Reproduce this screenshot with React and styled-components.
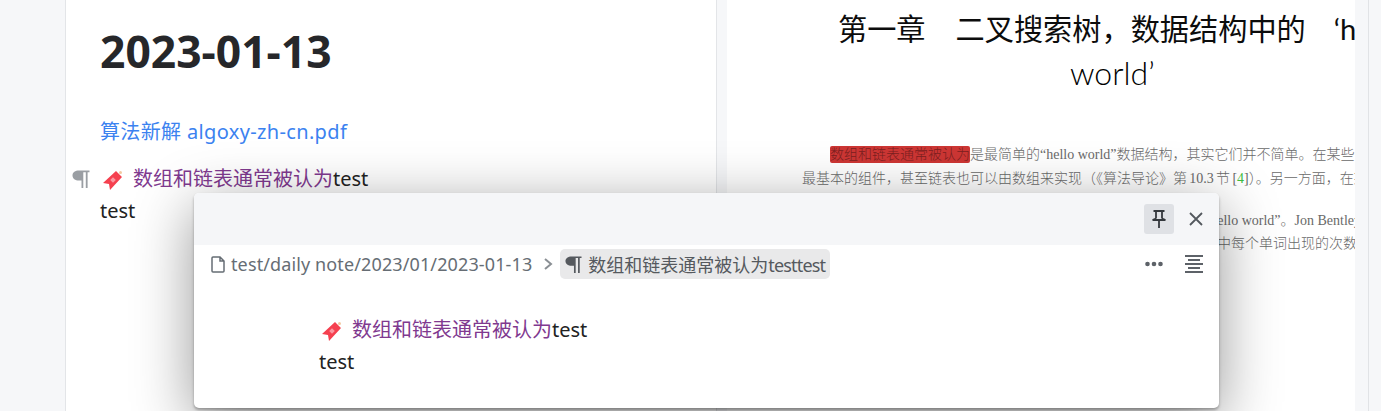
import React from 'react';
import styled, { createGlobalStyle } from 'styled-components';

const sans = `"Noto Sans", "Noto Sans CJK SC", sans-serif`;

const GlobalStyle = createGlobalStyle`
  html, body {
    margin: 0;
    padding: 0;
    background: #fff;
  }
`;

const Workspace = styled.div`
  position: relative;
  width: 1381px;
  height: 411px;
  overflow: hidden;
  display: grid;
  grid-template-columns: 65px 652px 10px 628px 26px;
  font-family: ${sans};
  color: #222;
`;

const Sidebar = styled.div`
  background: #f6f7f9;
`;

const NotePane = styled.div`
  background: #fff;
  border-left: 1px solid #e3e5e8;
  border-right: 1px solid #e3e5e8;
  padding: 25px 0 0 34px;
`;

const Gutter = styled.div`
  background: #f6f7f9;
`;

const PdfPane = styled.div`
  background: #fff;
  overflow: hidden;
  min-width: 0;
`;

const Scrollbar = styled.div`
  background: #f6f7f9;
  display: flex;
  justify-content: center;
  &::after {
    content: '';
    width: 1px;
    background: #e1e3e6;
  }
`;

const Title = styled.h1`
  margin: 0;
  font-size: 44.4px;
  line-height: 52px;
  font-weight: 700;
  color: #26272a;
`;

const FileLink = styled.div`
  margin-top: 41px;
  font-size: 20px;
  line-height: 28px;
  letter-spacing: 0.35px;
  color: #3b82f0;
`;

const Block = styled.div`
  position: relative;
  margin-top: ${({ $top }) => $top}px;
  font-size: 20px;
  line-height: 32px;
`;

const Gutterline = styled.span`
  position: absolute;
  left: -28px;
  top: 7px;
  display: flex;
  color: #9a9ea3;
`;

const Tag = styled.svg`
  width: 20px;
  height: 20px;
  margin: 0 10px 0 3px;
  vertical-align: -4px;
`;

const Quote = styled.span`
  color: #80398f;
`;

const PdfLine = styled.div`
  white-space: nowrap;
  margin-left: ${({ $left }) => $left}px;
  margin-top: ${({ $top }) => $top}px;
  word-spacing: ${({ $tight }) => ($tight ? '-1.2px' : '0')};
  font-family: "Liberation Serif", "Noto Sans CJK SC", serif;
  font-size: 14px;
  line-height: 20px;
  font-weight: 300;
  color: #6a6a6a;
`;

const ChapterLine = styled(PdfLine)`
  font-family: Lato, "Noto Sans CJK SC", sans-serif;
  font-size: 29.2px;
  line-height: 42px;
  font-weight: 400;
  color: #0c0c0c;
`;

const ChapterGap = styled.span`
  display: inline-block;
  width: ${({ $width }) => $width}px;
`;

const ChapterWord = styled(PdfLine)`
  font-family: Lato, sans-serif;
  font-size: 32px;
  line-height: 44px;
  font-weight: 300;
  color: #000;
`;

const Mark = styled.span`
  background: #cd3634;
  color: #7c2020;
  border-radius: 2px;
  padding: 1px 0;
`;

const Cite = styled.span`
  color: #3fbf3f;
`;

const Popover = styled.div`
  position: absolute;
  left: 194px;
  top: 193px;
  width: 1025px;
  height: 215px;
  background: #fff;
  border-radius: 5px;
  overflow: hidden;
  box-shadow: 0 14px 60px rgba(0, 0, 0, 0.42), 0 2px 3px rgba(0, 0, 0, 0.3);
  display: flex;
  flex-direction: column;
`;

const PopoverHead = styled.div`
  height: 52px;
  flex: none;
  background: #f5f6f8;
  display: flex;
  align-items: center;
  justify-content: flex-end;
  gap: 7px;
  padding-right: 8px;
`;

const HeadButton = styled.button`
  width: 30px;
  height: 30px;
  padding: 0;
  border: 0;
  border-radius: 3px;
  background: ${({ $active }) => ($active ? '#dfe1e5' : 'transparent')};
  color: ${({ $active }) => ($active ? '#33373c' : '#53585e')};
  display: grid;
  place-items: center;
`;

const Crumbs = styled.div`
  height: 38px;
  flex: none;
  display: flex;
  align-items: center;
  padding: 0 16px 0 17px;
  color: #666d74;
  font-size: 18px;
`;

const CrumbPath = styled.span`
  margin-left: 6px;
  letter-spacing: 0.12px;
`;

const Chevron = styled.svg`
  width: 12px;
  height: 14px;
  margin: 0 6px 0 10px;
`;

const Chip = styled.div`
  height: 30px;
  background: #e9e9ea;
  border-radius: 5px;
  padding: 0 5px;
  display: flex;
  align-items: center;
  gap: 6px;
  color: #55595e;
`;

const ChipLatin = styled.span`
  letter-spacing: -0.85px;
`;

const CrumbTools = styled.div`
  margin-left: auto;
  display: flex;
  align-items: center;
  gap: 22px;
`;

const PopoverBody = styled.div`
  padding: 31px 0 0 125px;
  font-size: 20px;
`;

const Pilcrow = ({ size = 18 }) => (
  <svg width={size} height={size} viewBox="0 0 18 18" fill="currentColor">
    <path d="M7 .5h10.5v1.7h-1.9V18h-1.8V2.2h-2.5V18H9.5v-7.6H7C3.2 10.4.5 8.4.5 5.4S3.2.5 7 .5z" />
  </svg>
);

const Bookmark = () => (
  <Tag viewBox="0 0 20 20">
    <polygon points="0,13 13,1 19,7 7,20 6,14" fill="#f5404f" />
    <rect x="8" y="8" width="4" height="4" fill="#fb98a2" transform="rotate(45 10 10)" />
    <circle cx="17.5" cy="2.5" r="1.5" fill="#f2c9a0" />
  </Tag>
);

const Quoted = () => (
  <>
    <Bookmark />
    <Quote>数组和链表通常被认为</Quote>test
    <br />
    test
  </>
);

export default function App() {
  return (
    <Workspace>
      <GlobalStyle />
      <Sidebar />
      <NotePane>
        <Title>2023-01-13</Title>
        <FileLink>算法新解 algoxy-zh-cn.pdf</FileLink>
        <Block $top={17}>
          <Gutterline>
            <Pilcrow />
          </Gutterline>
          <Quoted />
        </Block>
      </NotePane>
      <Gutter />
      <PdfPane>
        <ChapterLine $left={111} $top={8}>
          第一章<ChapterGap $width={30} />二叉搜索树，数据结构中的<ChapterGap $width={28} />‘hello
        </ChapterLine>
        <ChapterWord $left={343} $top={1}>world’</ChapterWord>
        <PdfLine $left={103} $top={50}>
          <Mark>数组和链表通常被认为</Mark>是最简单的“hello world”数据结构，其实它们并不简单。在某些系统中
        </PdfLine>
        <PdfLine $left={75} $top={4} $tight>
          最基本的组件，甚至链表也可以由数组来实现（《算法导论》第 10.3 节 [<Cite>4</Cite>]）。另一方面，在某些
        </PdfLine>
        <PdfLine $left={337} $top={22}>
          数组和链表也常被称作“hello world”。Jon Bentley 在书中
        </PdfLine>
        <PdfLine $left={406} $top={3}>
          统计一篇文章中每个单词出现的次数
        </PdfLine>
      </PdfPane>
      <Scrollbar />
      <Popover>
        <PopoverHead>
          <HeadButton $active aria-label="pin">
            <svg width="18" height="20" viewBox="0 0 18 20" fill="none" stroke="currentColor" strokeWidth="1.8">
              <path d="M3.5 2h11M6 2v7.5M12 2v7.5M2.5 11h13M6 9.5L2.5 11M12 9.5l3.5 1.5M9 11v8" />
            </svg>
          </HeadButton>
          <HeadButton aria-label="close">
            <svg width="16" height="16" viewBox="0 0 16 16" fill="none" stroke="currentColor" strokeWidth="1.8">
              <path d="M2 2l12 12M14 2L2 14" />
            </svg>
          </HeadButton>
        </PopoverHead>
        <Crumbs>
          <svg width="14" height="17" viewBox="0 0 14 17" fill="none" stroke="currentColor" strokeWidth="1.5">
            <path d="M1 2a1 1 0 0 1 1-1h7l4 4v10a1 1 0 0 1-1 1H2a1 1 0 0 1-1-1zM9 1v4h4" />
          </svg>
          <CrumbPath>test/daily note/2023/01/2023-01-13</CrumbPath>
          <Chevron viewBox="0 0 12 14" fill="none" stroke="#8a8f94" strokeWidth="2">
            <path d="M3 2l6 5-6 5" />
          </Chevron>
          <Chip>
            <Pilcrow size={17} />
            <span>
              数组和链表通常被认为<ChipLatin>testtest</ChipLatin>
            </span>
          </Chip>
          <CrumbTools>
            <svg width="18" height="6" viewBox="0 0 18 6" fill="#5d6268">
              <circle cx="2.5" cy="3" r="2.3" />
              <circle cx="9" cy="3" r="2.3" />
              <circle cx="15.5" cy="3" r="2.3" />
            </svg>
            <svg width="18" height="18" viewBox="0 0 18 18" stroke="#5d6268" strokeWidth="1.8">
              <path d="M0 1h18M3 5h12M0 9h18M3 13h12M0 17h18" />
            </svg>
          </CrumbTools>
        </Crumbs>
        <PopoverBody>
          <Block $top={0}>
            <Quoted />
          </Block>
        </PopoverBody>
      </Popover>
    </Workspace>
  );
}
